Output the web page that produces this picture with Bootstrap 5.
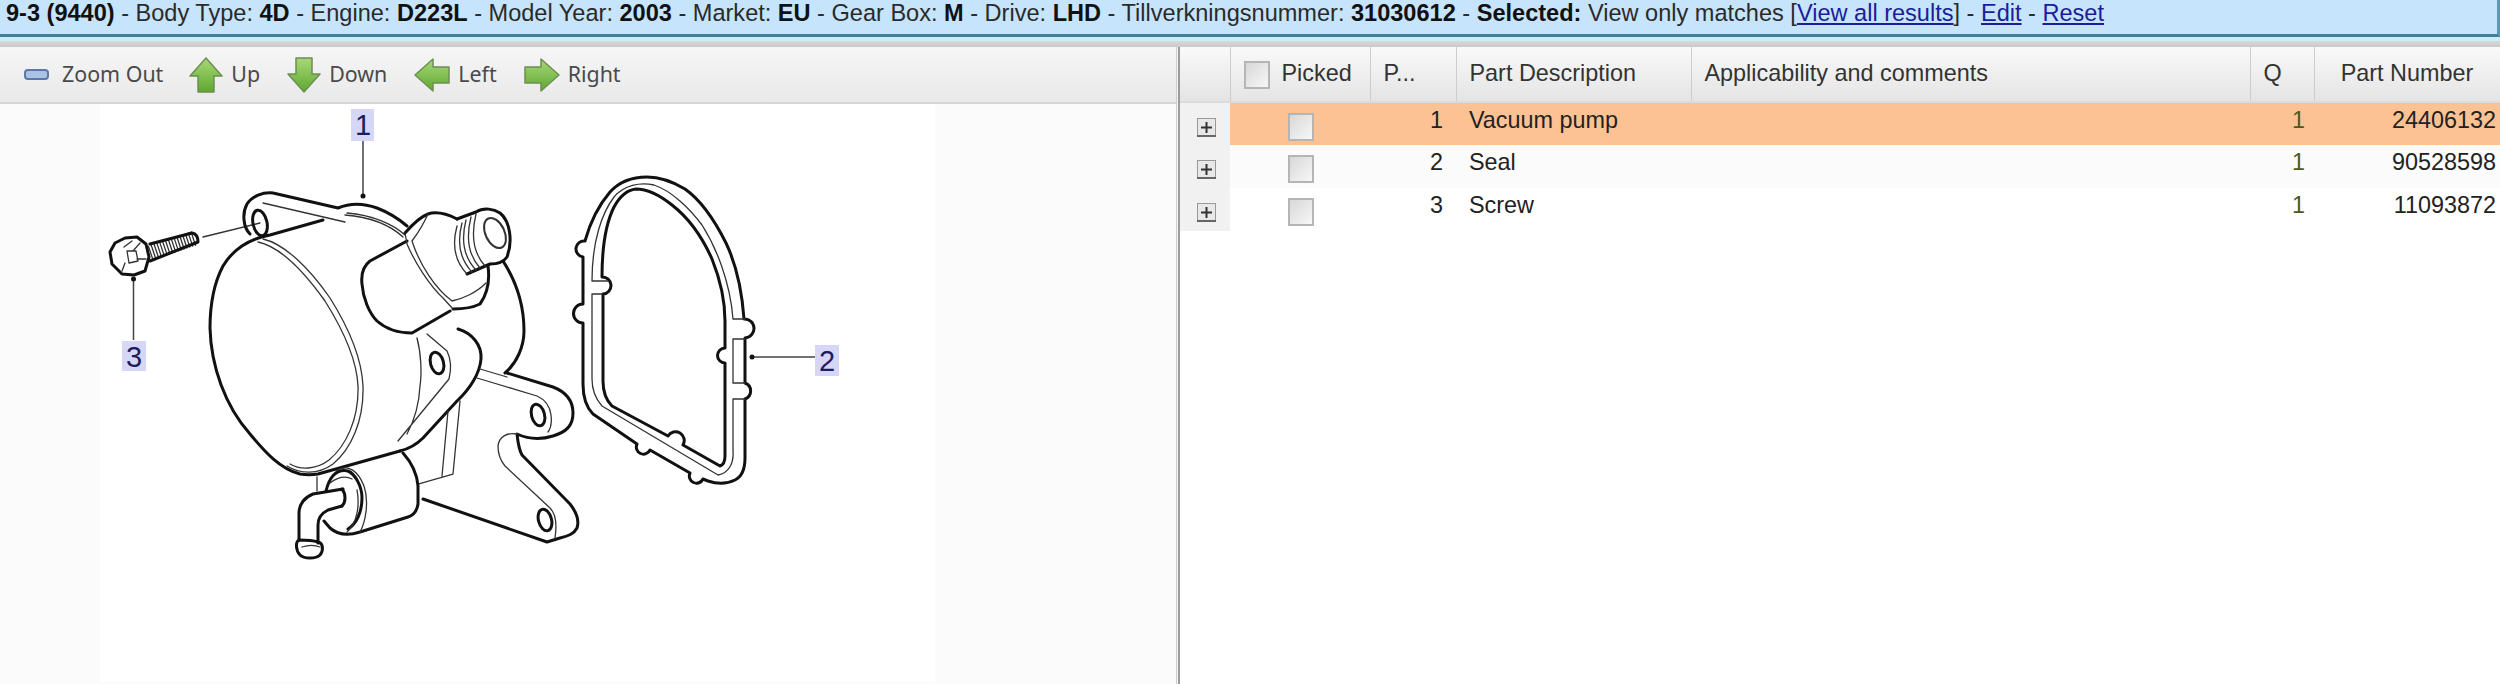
<!doctype html>
<html lang="en">
<head>
<meta charset="utf-8">
<title>Parts</title>
<link href="https://cdn.jsdelivr.net/npm/bootstrap@5.3.0/dist/css/bootstrap.min.css" rel="stylesheet">
<style>
html,body{height:684px;overflow:hidden;background:#fff;}
body{font-family:"Liberation Sans",Arial,sans-serif;color:#222;}
.infobar{height:37px;background:#c6e4fb;border-bottom:3px solid #3f7f98;border-right:3px solid #5a9ab5;font-size:23.55px;line-height:27px;padding:0 0 0 6px;color:#2a2a2a;white-space:nowrap;}
.infobar b{color:#111;}
.infobar a{color:#1c1c9c;}
.cyanline{height:4px;background:#cbeff6;}
.grayline{height:6px;background:linear-gradient(#d8d8d8,#c9c9c9);}
.mainrow{height:637px;}
.leftpane{width:1177px;background:#fbfbfb;border-right:1px solid #cfcfcf;}
.divider{width:3px;background:#f2f2f2;border-right:2px solid #9c9c9c;}
.toolbar{height:57px;background:linear-gradient(#f6f6f6,#e9e9e9);border-bottom:2px solid #d6d6d6;font-family:"Noto Sans",sans-serif;font-size:21.4px;color:#4a4a4a;padding-left:24px;}
.toolbar span{margin-left:8px;}
.tool{margin-right:27px;}
.tool.zoomitem{margin-right:26px;}
.tool.zoomitem span{margin-left:13px;}
.partsgrid{table-layout:fixed;width:1320px;margin:0;font-size:23.4px;border-collapse:collapse;}
.partsgrid th{height:55px;font-weight:400;background:linear-gradient(#f9f9f9,#e4e4e4);border:0;border-right:1px solid #cdcdcd;border-bottom:2px solid #dcdcdc;padding:0 0 0 13px;vertical-align:middle;color:#333;white-space:nowrap;overflow:hidden;}
.partsgrid td{padding:0 13px;border:0;height:43px;vertical-align:top;padding-top:5px;line-height:24px;color:#222;background:#fff;}
.partsgrid tr.picked td{background:#fcc294;}
.partsgrid tr.odd td{background:#fbfbfb;}
.partsgrid td.expcell{background:#f1f1f1!important;padding:15px 0 0 17px;}
.partsgrid td.qtycell{color:#4d5a1e;padding-right:9px;}
.partsgrid td.numcell{padding-right:4px;}
.partsgrid th.headexp{padding:0;}
.plusbox{display:block;width:19px;height:19px;}
.pickbox{display:block;width:26px;height:28px;border:2px solid #b5b5b5;background:linear-gradient(135deg,#d8d8d8,#f7f7f7);}
.rowpick{margin:10px 0 0 58px;}
.headpick{display:inline-block;vertical-align:middle;margin-right:12px;}
td.rowpickcell{padding:0!important;}
.diagram{display:block;}
.thick{fill:none;stroke:#111;stroke-width:3;stroke-linecap:round;stroke-linejoin:round;}
.thin{fill:none;stroke:#333;stroke-width:1.3;stroke-linecap:round;stroke-linejoin:round;}
.leader{fill:none;stroke:#444;stroke-width:1.5;}
.calloutbg{fill:#d6d6f6;}
.callout{font-family:"Liberation Sans",sans-serif;font-size:29px;fill:#1c1c5e;text-anchor:middle;}
</style>
</head>
<body>
<div class="infobar"><b>9-3 (9440)</b> - Body Type: <b>4D</b> - Engine: <b>D223L</b> - Model Year: <b>2003</b> - Market: <b>EU</b> - Gear Box: <b>M</b> - Drive: <b>LHD</b> - Tillverkningsnummer: <b>31030612</b> - <b>Selected:</b> View only matches [<a href="#">View all results</a>] - <a href="#">Edit</a> - <a href="#">Reset</a></div>
<div class="cyanline"></div>
<div class="grayline"></div>
<div class="d-flex mainrow">
  <div class="leftpane flex-shrink-0">
    <div class="toolbar d-flex align-items-center">
      <div class="tool zoomitem d-flex align-items-center"><svg width="25" height="11" viewBox="0 0 25 11"><rect x="1" y="1" width="23" height="9" rx="3" fill="#a9c2e6" stroke="#5d78a6" stroke-width="2"/></svg><span>Zoom Out</span></div>
      <div class="tool d-flex align-items-center"><svg width="34" height="36" viewBox="0 0 34 36"><defs><linearGradient id="gr" x1="0" x2="0" y1="0" y2="1"><stop offset="0" stop-color="#a8d878"/><stop offset="1" stop-color="#5fa830"/></linearGradient></defs><path d="M17 1 33 19H25V35H9V19H1Z" fill="url(#gr)" stroke="#6c8f52" stroke-width="1.5" stroke-linejoin="round"/></svg><span>Up</span></div>
      <div class="tool d-flex align-items-center"><svg width="34" height="36" viewBox="0 0 34 36"><path d="M17 35 33 17H25V1H9V17H1Z" fill="url(#gr)" stroke="#6c8f52" stroke-width="1.5" stroke-linejoin="round"/></svg><span>Down</span></div>
      <div class="tool d-flex align-items-center"><svg width="36" height="34" viewBox="0 0 36 34"><path d="M1 17 19 1V9H35V25H19V33Z" fill="url(#gr)" stroke="#6c8f52" stroke-width="1.5" stroke-linejoin="round"/></svg><span>Left</span></div>
      <div class="tool d-flex align-items-center"><svg width="36" height="34" viewBox="0 0 36 34"><path d="M35 17 17 1V9H1V25H17V33Z" fill="url(#gr)" stroke="#6c8f52" stroke-width="1.5" stroke-linejoin="round"/></svg><span>Right</span></div>
    </div>
    <svg class="diagram" width="1177" height="578" viewBox="0 103 1177 578" role="img" aria-label="Vacuum pump exploded diagram">
      <rect x="100" y="103" width="835" height="581" fill="#fff"/>
      <rect class="calloutbg" x="351" y="108" width="23" height="32"/><text class="callout" x="363" y="134">1</text>
      <rect class="calloutbg" x="122" y="340" width="24" height="30"/><text class="callout" x="134" y="366">3</text>
      <rect class="calloutbg" x="815" y="344" width="24" height="31"/><text class="callout" x="827" y="370">2</text>
      <path class="leader" d="M363 140V195M133.500 339V278M815 356H752"/>
      <circle cx="363" cy="195" r="2.500" fill="#111"/><circle cx="133.500" cy="278" r="2.500" fill="#111"/><circle cx="752" cy="356" r="2.500" fill="#111"/>
      <!-- bolt -->
      <path d="M150 252 195 237" fill="none" stroke="#333" stroke-width="15" stroke-dasharray="1.300 1.700"/>
      <path class="thick" d="M150 243 192 232Q198 233 198 241L150 260"/>
      <path class="thick" d="M125 237 137 236 146 243 149 256 145 270 134 274 122 273 112 263 110 251 115 242Z"/>
      <path class="thin" d="M124 246 132 240M127 250 136 250 138 260 129 262ZM125 262 122 270M137 258 146 258M133 250 140 242"/>
      <path class="thin" d="M203 236 260 222"/>
      <!-- housing -->
      <path class="thick" d="M250 233C243 226 242 212 247 203 252 195 263 191 273 192L338 207C352 201 366 203 377 207 390 212 400 219 407 225"/>
      <path class="thin" d="M263 202 345 221M345 214C370 216 390 224 403 236M347 212C372 214 393 223 405 234"/>
      <path class="thick" d="M323 219 270 234C248 238 232 250 223 265 213 284 210 305 210 327 211 365 225 405 250 433 265 451 280 468 300 473 306 474 312 474 318 473L400 450"/>
      <ellipse class="thick" cx="260" cy="222" rx="7" ry="13" transform="rotate(-12 260 222)"/>
      <!-- face -->
      <path class="thin" d="M263 238C285 243 310 268 330 297 352 332 362 362 363 385 364 420 351 448 333 463 318 474 300 473 287 465"/>
      <path class="thin" d="M258 241C282 246 305 272 325 300 347 335 357 363 358 385 359 418 346 445 329 459 316 469 300 469 290 463"/>
      <!-- rear dome -->
      <path class="thick" d="M503 260C516 280 524 305 524 330 524 345 517 362 505 372"/>
      <!-- lug -->
      <path class="thick" d="M458 328C472 332 482 344 481 358 480 372 470 388 457 400L423 437C415 445 408 448 400 450"/>
      <path class="thin" d="M417 337C421 352 422 372 420 385 419 405 413 422 407 433M427 333 447 350C452 360 451 370 449 378L398 440"/>
      <ellipse class="thick" cx="437" cy="362" rx="6.500" ry="11" transform="rotate(-15 437 362)"/>
      <!-- bracket -->
      <path class="thick" d="M507 372 553 386C566 391 573 400 573 412 573 425 566 431 553 435 540 439 528 438 517 433 518 442 519 449 522 454L570 503C577 512 579 521 577 527 574 533 568 535 560 537L547 541 423 498"/>
      <path class="thin" d="M480 368 507 376M477 377 537 395C546 399 550 406 551 414 552 422 551 427 548 431M517 433C507 431 499 436 498 445 498 454 500 459 505 465L550 507C556 513 557 524 555 537M460 400 453 473 418 483M448 410 442 475"/>
      <ellipse class="thick" cx="538" cy="414" rx="6.500" ry="11" transform="rotate(-15 538 414)"/>
      <ellipse class="thick" cx="545" cy="519" rx="6.500" ry="11" transform="rotate(-15 545 519)"/>
      <!-- lower cylinder -->
      <path class="thick" d="M403 452C412 462 417 472 418 485V503C417 510 414 514 408 516L360 531C348 535 338 534 330 527L324 520"/>
      <path class="thick" d="M326 490C330 474 338 468 348 470 355 473 362 485 362 497 362 512 356 523 348 528"/>
      <path class="thin" d="M330 482C338 476 346 475 352 478M357 489C360 505 357 522 347 531M336 470C348 462 358 470 364 485 369 500 366 520 360 531"/>
      <path class="thick" d="M343 488 313 493C305 496 299 503 299 512V539M342 505 328 509C322 512 318 517 318 524V542"/>
      <path class="thick" d="M342 488C346 493 346 501 342 505"/>
      <path class="thin" d="M317 476V490"/>
      <path class="thick" d="M299 539C295 541 296 550 300 554 304 558 316 558 320 554 324 549 323 542 318 541 312 539 304 539 299 539Z"/>
      <path class="thin" d="M302 546C308 544 315 544 320 546"/>
      <!-- fitting -->
      <path class="thick" d="M407 240 370 260C362 266 361 274 362 283 363 297 369 312 377 320 386 328 399 332 412 332L450 310"/>
      <path class="thick" d="M405 232C412 224 420 216 428 213 437 210 447 213 457 218M488 265C490 280 488 292 480 303 472 307 463 308 453 308"/>
      <path class="thin" d="M405 232 407 243C415 262 430 285 443 297L453 308M412 240C420 265 436 288 452 300M428 213C424 222 418 232 412 240M452 300C462 298 476 292 486 282"/>
      <!-- thread -->
      <path class="thick" d="M457 218 476 211C484 206 494 208 500 212 510 220 513 240 507 256 503 262 497 263 490 263L467 273"/>
      <ellipse class="thin" style="stroke-width:2" cx="495" cy="232" rx="9.500" ry="16" transform="rotate(-25 495 232)"/>
      <path class="thin" d="M457 225Q449 254 467 273M462 222Q454 252 472 271M466 219Q458 250 476 269M471 216Q463 248 480 267M476 213Q468 246 485 265"/>
      <!-- gasket -->
      <path class="thick" d="M585 240C590 222 598 205 610 191 620 180 633 176 647 176 662 176 675 182 685 188 702 200 716 222 726 242 736 263 742 290 744 318A9.500 9.500 0 0 1 745 337V382A8.500 8.500 0 0 1 745 398V457C745 468 741 476 735 479 727 483 717 483 708 480L703 478A7 7 0 0 1 690 472L650 449A7 7 0 0 1 637 443L593 413C586 406 583 395 583 383V322A7 7 0 0 1 583 303V256A8 8 0 0 1 585 240Z"/>
      <path class="thick" d="M602 276C602 250 604 226 614 206 620 195 627 189 636 188 648 188 662 196 672 204 690 218 704 240 712 258 720 278 725 300 725 320V347A7 7 0 0 0 725 362V455C725 460 723 464 720 465L683 444A8 8 0 0 0 668 435L612 405C606 399 603 391 603 380V293A8 8 0 0 0 602 276Z"/>
      <path class="thin" d="M592 280C592 240 602 212 614 196 624 184 640 181 654 184 672 190 690 208 702 224 716 246 730 280 733 318M733 338V382M733 398V450C734 462 729 472 718 474L602 405C594 396 592 388 592 378V293M592 280H608M592 293H602M733 318H745M733 338H745M733 382H745M733 398H745"/>
    </svg>
  </div>
  <div class="divider flex-shrink-0"></div>
  <div class="flex-grow-1 overflow-hidden">
    <table class="table partsgrid">
      <colgroup><col style="width:50px"><col style="width:140px"><col style="width:86px"><col style="width:235px"><col style="width:559px"><col style="width:64px"><col style="width:186px"></colgroup>
      <thead><tr>
        <th class="headexp"></th>
        <th><span class="pickbox headpick"></span>Picked</th>
        <th>P...</th>
        <th>Part Description</th>
        <th>Applicability and comments</th>
        <th>Q</th>
        <th class="text-center" style="padding:0">Part Number</th>
      </tr></thead>
      <tbody>
        <tr class="picked"><td class="expcell"><svg class="plusbox" viewBox="0 0 19 19"><rect x=".5" y=".5" width="18" height="18" fill="#e8e8e8" stroke="#999"/><path d="M9.500 4V15M4 9.500H15" stroke="#333" stroke-width="2"/><path d="M0 18H19" stroke="#666" stroke-width="2"/></svg></td><td class="rowpickcell"><span class="pickbox rowpick"></span></td><td class="text-end">1</td><td>Vacuum pump</td><td></td><td class="text-end qtycell">1</td><td class="text-end numcell">24406132</td></tr>
        <tr class="odd"><td class="expcell"><svg class="plusbox" viewBox="0 0 19 19"><rect x=".5" y=".5" width="18" height="18" fill="#e8e8e8" stroke="#999"/><path d="M9.500 4V15M4 9.500H15" stroke="#333" stroke-width="2"/><path d="M0 18H19" stroke="#666" stroke-width="2"/></svg></td><td class="rowpickcell"><span class="pickbox rowpick"></span></td><td class="text-end">2</td><td>Seal</td><td></td><td class="text-end qtycell">1</td><td class="text-end numcell">90528598</td></tr>
        <tr><td class="expcell"><svg class="plusbox" viewBox="0 0 19 19"><rect x=".5" y=".5" width="18" height="18" fill="#e8e8e8" stroke="#999"/><path d="M9.500 4V15M4 9.500H15" stroke="#333" stroke-width="2"/><path d="M0 18H19" stroke="#666" stroke-width="2"/></svg></td><td class="rowpickcell"><span class="pickbox rowpick"></span></td><td class="text-end">3</td><td>Screw</td><td></td><td class="text-end qtycell">1</td><td class="text-end numcell">11093872</td></tr>
      </tbody>
    </table>
  </div>
</div>
</body>
</html>
